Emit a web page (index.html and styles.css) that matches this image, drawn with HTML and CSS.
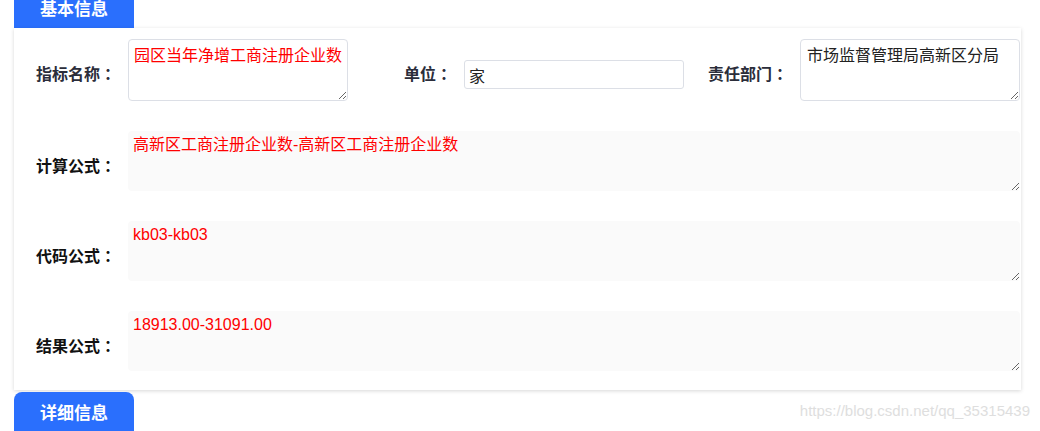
FILE: index.html
```html
<!DOCTYPE html>
<html lang="zh-CN">
<head>
<meta charset="utf-8">
<title>基本信息</title>
<link rel="stylesheet" href="styles.css">
</head>
<body>
<div class="page">
  <div class="tab tab-first">基本信息</div>
  <div class="card">
    <div class="row-top">
      <div class="field">
        <label class="label label-top">指标名称<span class="colon" lang="zh-TW">：</span></label>
        <textarea class="box red">园区当年净增工商注册企业数</textarea>
      </div>
      <div class="field">
        <label class="label label-top">单位<span class="colon" lang="zh-TW">：</span></label>
        <input class="input" type="text" value="家">
      </div>
      <div class="field">
        <label class="label label-top">责任部门<span class="colon" lang="zh-TW">：</span></label>
        <textarea class="box dark">市场监督管理局高新区分局</textarea>
      </div>
    </div>
    <div class="row-wide">
      <label class="label label-wide">计算公式<span class="colon" lang="zh-TW">：</span></label>
      <textarea class="wide red">高新区工商注册企业数-高新区工商注册企业数</textarea>
    </div>
    <div class="row-wide">
      <label class="label label-wide">代码公式<span class="colon" lang="zh-TW">：</span></label>
      <textarea class="wide red">kb03-kb03</textarea>
    </div>
    <div class="row-wide">
      <label class="label label-wide">结果公式<span class="colon" lang="zh-TW">：</span></label>
      <textarea class="wide red">18913.00-31091.00</textarea>
    </div>
  </div>
  <div class="tab tab-next">详细信息</div>
</div>
<div class="watermark">https://blog.csdn.net/qq_35315439</div>
</body>
</html>
```

FILE: styles.css
```css
html, body {
  margin: 0;
  padding: 0;
  background: #ffffff;
  overflow: hidden;
}

body {
  font-family: "Liberation Sans", "Noto Sans CJK SC", sans-serif;
  height: 431px;
  position: relative;
}

.page {
  width: 1007px;
  margin-left: 14px;
}

.tab {
  width: 120px;
  height: 40px;
  background: #2a6ffd;
  color: #ffffff;
  font-family: "Noto Sans CJK SC", sans-serif;
  font-weight: 700;
  font-size: 17px;
  line-height: 40px;
  text-align: center;
}

.tab-first {
  margin-top: -12px;
}

.tab-next {
  margin-top: 2px;
  border-radius: 8px 8px 0 0;
}

.card {
  background: #ffffff;
  box-shadow: 0 1px 4px rgba(0, 0, 0, 0.16);
  padding: 11px 0 19px;
}

.row-top {
  display: grid;
  grid-template-columns: 336px 336px 335px;
}

.field {
  display: flex;
  align-items: center;
}

.label {
  flex: none;
  width: 114px;
  box-sizing: border-box;
  padding-right: 12px;
  text-align: right;
  font-family: "Noto Sans CJK SC", sans-serif;
  font-weight: 700;
  font-size: 16px;
  line-height: 22px;
}

.colon {
  font-family: "Noto Sans CJK TC", "Noto Sans CJK SC", sans-serif;
}

.label-top {
  color: #2b2d3a;
  margin-top: 5px;
}

.label-wide {
  color: #111111;
  margin-top: 8px;
}

textarea {
  font-family: "Liberation Sans", "Noto Sans CJK SC", sans-serif;
  font-size: 16px;
  line-height: 24px;
  box-sizing: border-box;
  margin: 0;
  outline: none;
}

.box {
  width: 220px;
  height: 62px;
  border: 1px solid #dcdfe6;
  border-radius: 4px;
  padding: 4px 5px;
  background: #ffffff;
}

.box.dark {
  color: #222222;
  padding-left: 6px;
}

.red {
  color: #ff0000;
}

.input {
  width: 220px;
  height: 29px;
  box-sizing: border-box;
  border: 1px solid #dcdfe6;
  border-radius: 3px;
  padding: 0 4px;
  margin: 9px 0 0;
  font-family: "Noto Sans CJK SC", sans-serif;
  font-size: 16px;
  color: #222222;
  background: #ffffff;
  outline: none;
}

.row-wide {
  display: flex;
  align-items: center;
  margin-top: 30px;
}

.wide {
  flex: none;
  width: 892px;
  height: 60px;
  border: none;
  border-radius: 4px;
  background: #fafafa;
  padding: 2px 5px;
}

.watermark {
  position: absolute;
  right: 10px;
  top: 402px;
  font-family: "Liberation Sans", sans-serif;
  font-size: 15px;
  color: #dedede;
}
```
